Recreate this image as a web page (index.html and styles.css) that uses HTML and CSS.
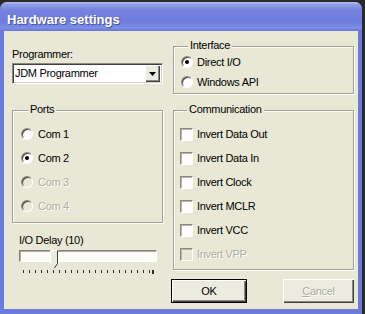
FILE: index.html
```html
<!doctype html>
<html>
  <head>
    <title>Hardware settings</title>
    <link rel="stylesheet" href="styles.css">
  </head>
  <body>
    <div class="window">
      <div class="titlebar">Hardware settings</div>
      <div class="client">
        <div class="col left">
          <div class="label">Programmer:</div>
          <div class="select">
            <span class="select-text">JDM Programmer</span>
            <span class="select-btn">
              <svg width="7" height="4" viewBox="0 0 7 4"><path d="M0 0h7L3.5 4z" fill="#000"/></svg>
            </span>
          </div>
          <div class="group ports">
            <span class="legend">Ports</span>
            <div class="opt"><span class="radio"></span>Com 1</div>
            <div class="opt"><span class="radio checked"></span>Com 2</div>
            <div class="opt disabled"><span class="radio"></span>Com 3</div>
            <div class="opt disabled"><span class="radio"></span>Com 4</div>
          </div>
          <div class="label delay">I/O Delay (10)</div>
          <div class="slider">
            <div class="channel"></div>
            <svg class="thumb" width="9" height="19" viewBox="0 0 9 19">
              <path d="M0.5 18V0.5H8" fill="none" stroke="#fff"/>
              <path d="M1 1h7v12l-3.5 5L1 13z" fill="#ecebdf"/>
              <path d="M7.5 0.5V13.5L4.5 18" fill="none" stroke="#404040"/>
            </svg>
            <svg class="ticks" width="140" height="4" viewBox="0 0 140 4">
              <path d="M4.5 0v3M10.5 0v3M16.5 0v3M22.5 0v3M28.5 0v3M34.5 0v3M40.5 0v3M46.5 0v3M52.5 0v3M58.5 0v3M64.5 0v3M70.5 0v3M76.5 0v3M82.5 0v3M88.5 0v3M94.5 0v3M100.5 0v3M106.5 0v3M112.5 0v3M118.5 0v3M124.5 0v3M130.5 0v3M133.5 0v4M134.5 0v4" stroke="#303030"/>
            </svg>
          </div>
        </div>
        <div class="col right">
          <div class="group interface">
            <span class="legend">Interface</span>
            <div class="opt"><span class="radio checked"></span>Direct I/O</div>
            <div class="opt"><span class="radio"></span>Windows API</div>
          </div>
          <div class="group comm">
            <span class="legend">Communication</span>
            <div class="opt"><span class="check"></span>Invert Data Out</div>
            <div class="opt"><span class="check"></span>Invert Data In</div>
            <div class="opt"><span class="check"></span>Invert Clock</div>
            <div class="opt"><span class="check"></span>Invert MCLR</div>
            <div class="opt"><span class="check"></span>Invert VCC</div>
            <div class="opt disabled"><span class="check"></span>Invert VPP</div>
          </div>
          <div class="buttons">
            <button class="btn default">OK</button>
            <button class="btn off" disabled><u>C</u>ancel</button>
          </div>
        </div>
      </div>
    </div>
  </body>
</html>
```
FILE: styles.css
```css
body { margin: 0; background: #2a2925; font-family: "Liberation Sans", Arial, sans-serif; font-size: 11px; letter-spacing: -0.3px; color: #000; }

.window { width: 362px; margin-top: 2px; background: #6b7bd9; border-radius: 7px 7px 0 0; overflow: hidden; }
.titlebar { height: 29px; box-sizing: border-box; padding: 10px 0 0 7px; line-height: 15px; font-size: 13px; font-weight: bold; letter-spacing: 0; color: #fff; text-shadow: 1px 1px 0 #4a55a8;
  background: linear-gradient(to bottom, #b3c0f4 0, #8d9ae6 3px, #7483e0 8px, #6e7ddc 20px, #7e8de5 26px, #6676d8 29px); }

.client { display: flex; gap: 10px; margin: 0 4px 5px; height: 278px; padding: 0 4px 0 8px; box-sizing: border-box; background: #e9e8d6; }
.col { display: flex; flex-direction: column; }
.left { width: 151px; }
.right { width: 181px; }

.label { line-height: 13px; margin-top: 17px; }
.label.delay { margin-top: 11px; margin-left: 7px; }

.select { display: flex; align-items: center; height: 21px; margin-top: 2px; box-sizing: border-box; background: #fff;
  border: 1px solid; border-color: #8a897f #fff #fff #8a897f; box-shadow: inset 1px 1px 0 #404040, inset -1px -1px 0 #d6d3c4; }
.select-text { flex: 1; padding-left: 2px; line-height: 13px; }
.select-btn { display: flex; align-items: center; justify-content: center; width: 15px; height: 17px; margin-right: 2px; box-sizing: border-box; background: #ecebdf;
  box-shadow: inset 1px 1px 0 #fff, inset -1px -1px 0 #404040, inset -2px -2px 0 #8a897f; }

.group { box-sizing: border-box; border: 1px solid #a3a293; box-shadow: 1px 1px 0 #fff, inset 1px 1px 0 #fff; }
.legend { display: block; width: fit-content; margin: -8px 0 6px 7px; padding: 0 2px; line-height: 13px; background: #e9e8d6; }
.ports { height: 113px; margin-top: 26px; padding-left: 8px; }
.interface { height: 48px; margin-top: 15px; padding-left: 7px; }
.interface .legend { margin-bottom: 0; }
.interface .opt { height: 20px; }
.comm { height: 160px; margin-top: 16px; padding-left: 6px; }

.opt { display: flex; align-items: center; height: 24px; line-height: 13px; }
.opt.disabled { color: #aeada0; text-shadow: 1px 1px 0 #fff; }

.radio { width: 12px; height: 12px; margin-right: 5px; box-sizing: border-box; border-radius: 50%; background: #fff; position: relative;
  border: 1px solid; border-color: #8a897f #fff #fff #8a897f; box-shadow: inset 1px 1px 0 #404040; }
.radio.checked::after { content: ""; position: absolute; left: 3px; top: 3px; width: 4px; height: 4px; border-radius: 50%; background: #000; }
.interface .radio { margin-right: 4px; }
.disabled .radio { background: #e9e8d6; }

.check { width: 13px; height: 13px; margin-right: 4px; box-sizing: border-box; background: #fff;
  border: 1px solid; border-color: #8a897f #fff #fff #8a897f; box-shadow: inset 1px 1px 0 #b8b7aa; }
.disabled .check { background: #e9e8d6; }

.slider { position: relative; width: 138px; height: 24px; margin: 3px 0 0 7px; }
.channel { height: 12px; box-sizing: border-box; background: #fcfcf6; border: 1px solid; border-color: #808078 #fff #fff #808078; box-shadow: inset 1px 1px 0 #b0afa2; }
.thumb { position: absolute; left: 31px; top: 0; }
.ticks { position: absolute; left: 0; top: 20px; }

.buttons { display: flex; margin: 9px 0 0 -2px; }
.btn { height: 24px; padding: 0; font: inherit; letter-spacing: -0.3px; background: #ecebdf; border: none; color: #000;
  box-shadow: inset 1px 1px 0 #fff, inset -1px -1px 0 #404040, inset -2px -2px 0 #8a897f; }
.btn.default { width: 76px; border: 1px solid #000; }
.btn.off { width: 71px; margin-left: 36px; color: #aeada0; text-shadow: 1px 1px 0 #fff; }
```
